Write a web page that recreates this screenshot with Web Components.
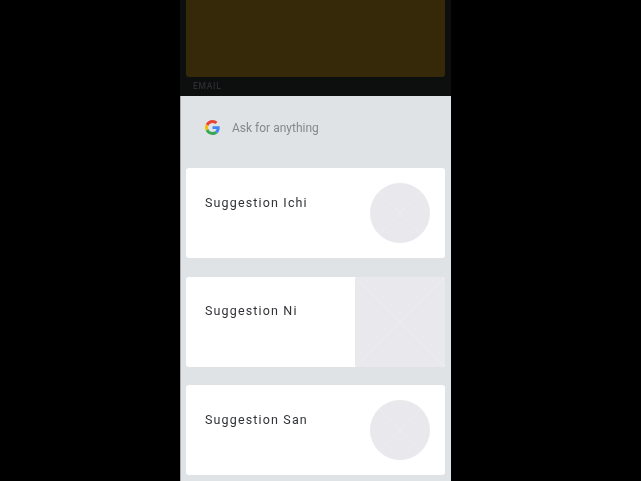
<!DOCTYPE html>
<html>
<head>
<meta charset="utf-8">
<title>Suggestions</title>
<style>
html, body { margin: 0; height: 100%; background: #000; overflow: hidden; }
body { display: flex; padding-left: 180px; box-sizing: border-box; }
</style>
</head>
<body>
<phone-screen>
  <suggest-card slot="cards" shape="circle">Suggestion Ichi</suggest-card>
  <suggest-card slot="cards" shape="square">Suggestion Ni</suggest-card>
  <suggest-card slot="cards" shape="circle">Suggestion San</suggest-card>
</phone-screen>

<template id="phone-template">
  <style>
    /* the reference is a soft capture, so the whole screen gets a slight blur */
    :host { display: flex; flex-direction: column; width: 271px; height: 481px; background: #0d0e0e; overflow: hidden; filter: blur(.35px); }
    .behind { height: 96px; flex: none; padding: 0 6px; box-sizing: border-box; }
    .hero { height: 77px; background: #36290a; border-radius: 0 0 3px 3px; }
    .label { font: 500 8.5px/18px Roboto, sans-serif; letter-spacing: .7px; color: #2c2e31; padding-left: 7px; }
    .sheet { flex: 1; background: #dfe3e6; border-left: 1px solid #a9adaf; padding: 0 6px 0 5px; display: flex; flex-direction: column; }
    .cards { display: flex; flex-direction: column; gap: 18.5px; }
  </style>
  <div class="behind">
    <div class="hero"></div>
    <div class="label">EMAIL</div>
  </div>
  <div class="sheet">
    <search-bar>Ask for anything</search-bar>
    <div class="cards"><slot name="cards"></slot></div>
  </div>
</template>

<template id="search-template">
  <style>
    :host { display: flex; align-items: center; height: 72px; padding: 0 0 9px 19px; box-sizing: border-box; gap: 12px; font: 400 12px Roboto, sans-serif; color: #85898d; }
    svg { width: 15px; height: 15px; flex: none; }
  </style>
  <svg viewBox="0 0 48 48" aria-hidden="true">
    <path fill="#EA4335" d="M24 9.5c3.5 0 6.7 1.2 9.2 3.6l6.9-6.9C35.9 2.4 30.5 0 24 0 14.6 0 6.5 5.4 2.6 13.2l8 6.2C12.4 13.7 17.7 9.5 24 9.5z"/>
    <path fill="#4285F4" d="M46.98 24.55c0-1.57-.15-3.09-.38-4.55H24v9.02h12.94c-.58 2.96-2.26 5.48-4.78 7.18l7.73 6c4.51-4.18 7.09-10.36 7.09-17.65z"/>
    <path fill="#FBBC05" d="M10.53 28.59c-.48-1.45-.76-2.99-.76-4.59s.27-3.14.76-4.59l-7.98-6.19C.92 16.46 0 20.12 0 24c0 3.88.92 7.54 2.56 10.78l7.97-6.19z"/>
    <path fill="#34A853" d="M24 48c6.48 0 11.93-2.13 15.89-5.81l-7.73-6c-2.15 1.45-4.92 2.3-8.16 2.3-6.26 0-11.57-4.22-13.47-9.91l-7.98 6.19C6.51 42.62 14.62 48 24 48z"/>
  </svg>
  <slot></slot>
</template>

<template id="card-template">
  <style>
    :host { display: flex; height: 90px; background: #fff; border-radius: 3px; overflow: hidden; font: 400 12.5px Roboto, sans-serif; letter-spacing: 1.15px; color: #303236; }
    .text { flex: 1; padding: 26.6px 0 0 19px; line-height: 15px; }
    .media { flex: none; width: 90px; display: flex; align-items: center; justify-content: center; }
    svg { display: block; background: #e9e9ed; }
    line { stroke: #edeef1; stroke-width: 1; }
    :host([shape="square"]) svg { width: 90px; height: 90px; }
    :host([shape="circle"]) svg { width: 60px; height: 60px; border-radius: 50%; }
  </style>
  <div class="text"><slot></slot></div>
  <div class="media">
    <!-- placeholder picture, a faint cross -->
    <svg viewBox="0 0 90 90" aria-hidden="true">
      <line x1="0" y1="0" x2="90" y2="90"/>
      <line x1="90" y1="0" x2="0" y2="90"/>
    </svg>
  </div>
</template>

<script>
function shadowFrom(host, id) {
  const root = host.attachShadow({ mode: "open" });
  root.appendChild(document.getElementById(id).content.cloneNode(true));
}

class PhoneScreen extends HTMLElement {
  constructor() {
    super();
    shadowFrom(this, "phone-template");
  }
}

class SearchBar extends HTMLElement {
  constructor() {
    super();
    shadowFrom(this, "search-template");
  }
}

class SuggestCard extends HTMLElement {
  constructor() {
    super();
    shadowFrom(this, "card-template");
  }
}

customElements.define("search-bar", SearchBar);
customElements.define("suggest-card", SuggestCard);
customElements.define("phone-screen", PhoneScreen);
</script>
</body>
</html>
